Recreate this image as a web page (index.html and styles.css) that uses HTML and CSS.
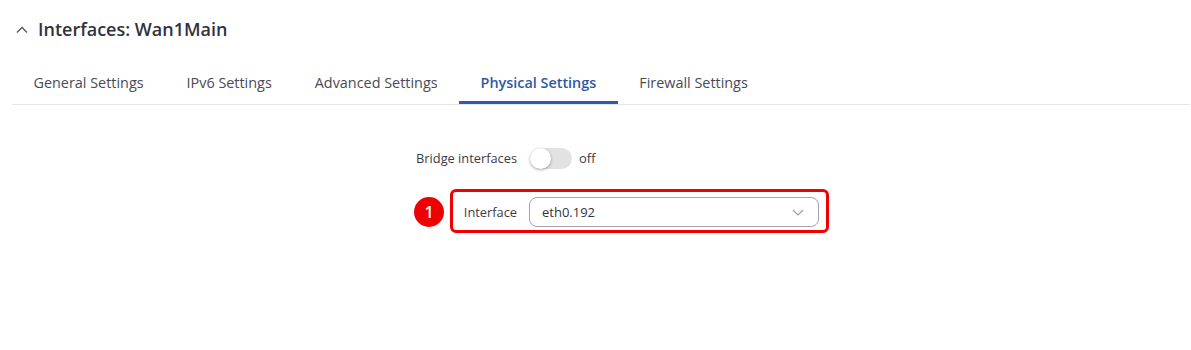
FILE: index.html
```html
<!DOCTYPE html>
<html>
<head>
<meta charset="utf-8">
<link rel="stylesheet" href="styles.css">
</head>
<body>
<div class="page">
  <div class="header">
    <svg class="collapse" width="12" height="8" viewBox="0 0 12 8"><path d="M1 6.5 L6 1.5 L11 6.5" fill="none" stroke="#555" stroke-width="1.3"/></svg>
    <h1 class="title">Interfaces: Wan1Main</h1>
  </div>
  <div class="tabs">
    <div class="tab">General Settings</div>
    <div class="tab">IPv6 Settings</div>
    <div class="tab">Advanced Settings</div>
    <div class="tab active">Physical Settings</div>
    <div class="tab">Firewall Settings</div>
  </div>
  <div class="form">
    <div class="row">
      <label class="label">Bridge interfaces</label>
      <div class="control">
        <span class="toggle"><span class="knob"></span></span>
        <span class="state">off</span>
      </div>
    </div>
    <div class="row">
      <label class="label">Interface</label>
      <div class="control">
        <div class="select">
          <span class="value">eth0.192</span>
          <svg class="caret" width="12" height="7" viewBox="0 0 12 7"><path d="M1 1 L6 6 L11 1" fill="none" stroke="#9a9aa4" stroke-width="1.1"/></svg>
        </div>
      </div>
      <div class="highlight"></div>
      <div class="badge">1</div>
    </div>
  </div>
</div>
</body>
</html>
```
FILE: styles.css
```css
* { box-sizing: border-box; }
html, body { margin: 0; padding: 0; background: #fff; }
body { font-family: "Open Sans", "Noto Sans", sans-serif; color: #333; }
.page { width: 1191px; height: 350px; }
.header { display: flex; align-items: center; height: 58px; padding-left: 16px; }
.collapse { margin-right: 10px; margin-top: 1px; }
.title { margin: 0; font-size: 18px; font-weight: 600; color: #32323e; line-height: 24px; }
.tabs { display: flex; margin: 5px 1px 0 12px; border-bottom: 1px solid #e6e6e6; }
.tab { padding: 10px 21.5px 8px; border-bottom: 3px solid transparent; font-size: 14.4px; line-height: 20px; color: #4a4a56; }
.tab.active { color: #2d5aa4; font-weight: 600; border-bottom-color: #2d5cab; }
.form { padding-top: 38px; margin-left: 300px; display: flex; flex-direction: column; gap: 24px; }
.row { position: relative; display: flex; align-items: center; height: 30px; }
.label { width: 217px; text-align: right; font-size: 12.8px; color: #3c3c46; }
.control { display: flex; align-items: center; margin-left: 12px; }
.toggle { position: relative; display: inline-block; width: 42px; height: 21px; border-radius: 11px; background: #e2e2e2; margin-left: 1px; }
.knob { position: absolute; left: 0; top: 0; width: 21px; height: 21px; border-radius: 50%; background: #fff; box-shadow: 0 1px 3px rgba(0,0,0,0.35); }
.state { font-size: 13px; color: #3c3c46; margin-left: 7px; }
.select { display: flex; align-items: center; justify-content: space-between; width: 290px; height: 30px; border: 1px solid #a3a3ad; border-radius: 8px; padding: 0 14px 0 12px; }
.value { font-size: 13px; color: #33333d; }
.highlight { position: absolute; left: 150px; top: -8px; width: 379px; height: 44px; border: 3px solid #f00000; border-radius: 6px; }
.badge { position: absolute; left: 114px; top: 0; width: 30px; height: 30px; border-radius: 50%; background: #ee0000; color: #fff; font-size: 16px; font-weight: 600; line-height: 30px; text-align: center; }
```
